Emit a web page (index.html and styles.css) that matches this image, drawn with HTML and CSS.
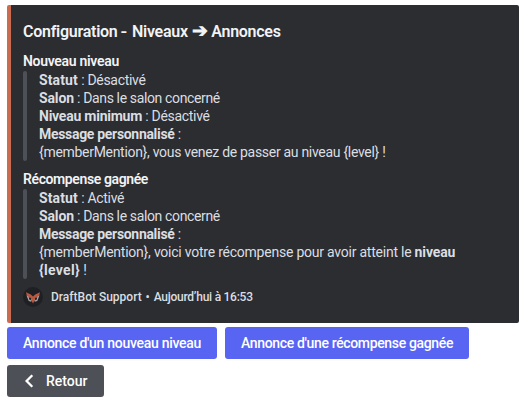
FILE: index.html
```
<!DOCTYPE html>
<html lang="fr">
<head>
<meta charset="utf-8">
<title>Configuration - Niveaux</title>
<link rel="stylesheet" href="styles.css">
</head>
<body>
<article class="embed">
  <h1 class="title">Configuration <span class="dash">-</span> Niveaux <span class="arrow">➔</span> Annonces</h1>
  <section class="field">
    <h2 class="name">Nouveau niveau</h2>
    <div class="quote">
      <p><b class="wide">Statut</b> : Désactivé</p>
      <p><b class="snug">Salon</b><span class="tight"> : Dans le salon concerné</span></p>
      <p><b>Niveau minimum</b> : Désactivé</p>
      <p><b class="message">Message personnalisé</b> :</p>
      <p>{memberMention}, vous venez de passer au niveau {level} !</p>
    </div>
  </section>
  <section class="field">
    <h2 class="name reward">Récompense gagnée</h2>
    <div class="quote">
      <p><b class="wide">Statut</b> : Activé</p>
      <p><b class="snug">Salon</b><span class="tight"> : Dans le salon concerné</span></p>
      <p><b class="message">Message personnalisé</b> :</p>
      <p class="long">{memberMention}, voici votre récompense pour avoir atteint le <b class="snug">niveau</b><br><b class="level">{level}</b> !</p>
    </div>
  </section>
  <footer class="footer">
    <svg class="avatar" viewBox="0 0 20 20" aria-hidden="true">
      <circle cx="10" cy="10" r="10" fill="#1f2024"/>
      <path fill="#a9a3a3" d="M3.500 8.500l3 1 2.500 3-.8 2.200-2.500-.6zM16.500 8.500l-3 1-2.500 3 .8 2.200 2.500-.6z"/>
      <path fill="#252327" d="M5.800 10l2.400 1.300-.5 2-1.500-.8zM14.200 10l-2.400 1.300.5 2 1.500-.8z"/>
      <path fill="#b9573f" d="M3 5.200l4.800 2.200L10 9.400l2.200-2L17 5.200l-.8 3.600-4 2L10.800 15 10 16.400 9.200 15l-1.400-4.200-4-2z"/>
    </svg>
    <span class="author">DraftBot Support</span><span class="dot">•</span><time class="date">Aujourd’hui à 16:53</time>
  </footer>
</article>
<div class="row first">
  <button class="button create">Annonce d'un nouveau niveau</button>
  <button class="button prize">Annonce d'une récompense gagnée</button>
</div>
<div class="row">
  <button class="button back">
    <svg class="chevron" viewBox="0 0 20 20" aria-hidden="true"><path d="M11.300 4.200L5.600 10l5.700 5.800"/></svg>
    Retour
  </button>
</div>
</body>
</html>
```
FILE: styles.css
```
* { box-sizing: border-box; }
body {
  margin: 0;
  padding: 5px 9px 0 7px;
  background: #fff;
  font: 14px/18px Roboto, "Noto Sans", sans-serif;
}
h1, h2, p { margin: 0; }
.embed {
  height: 318px;
  padding: 16px 16px 16px 12px;
  border-left: 4px solid #cb6b50;
  border-radius: 2px;
  background: #2b2d31;
  color: #dbdee1;
}
.title {
  height: 22px;
  color: #f2f3f5;
  font-size: 16px;
  font-weight: 600;
  line-height: 22px;
  letter-spacing: -.26px;
  white-space: nowrap;
}
.dash {
  display: inline-block;
  width: 7px;
  transform: scaleX(1.150);
}
.arrow {
  display: inline-block;
  width: 16px;
  font-size: 19px;
  line-height: 16px;
  letter-spacing: 0;
}
.field { margin-top: 9px; }
.name {
  margin-bottom: 1px;
  color: #f2f3f5;
  font-size: 14px;
  font-weight: 600;
  line-height: 18px;
  letter-spacing: -.3px;
}
.reward { letter-spacing: -.39px; }
.quote {
  position: relative;
  padding-left: 16px;
  letter-spacing: -.3px;
  white-space: nowrap;
}
.quote::before {
  content: "";
  position: absolute;
  inset: 0 auto 0 0;
  width: 4px;
  border-radius: 4px;
  background: #4e5058;
}
.quote b { font-weight: 700; letter-spacing: -.24px; }
.quote .wide { letter-spacing: .13px; }
.quote .snug { letter-spacing: -.13px; }
.quote .message { letter-spacing: -.31px; }
.quote .level { letter-spacing: .33px; }
.tight { letter-spacing: -.36px; }
.long { letter-spacing: -.23px; }
.footer {
  display: flex;
  align-items: center;
  height: 20px;
  margin-top: 8px;
  font-size: 12px;
  font-weight: 500;
  line-height: 16px;
}
.avatar { width: 20px; height: 20px; margin-right: 8px; }
.dot { width: 12px; text-align: center; }
.date { letter-spacing: -.26px; }
.row { display: flex; gap: 8px; margin-top: 6px; }
.row.first { margin-top: 4px; }
.button {
  display: flex;
  align-items: center;
  height: 32px;
  padding: 0 0 0 16px;
  border: 0;
  border-radius: 3px;
  background: #5865f2;
  color: #fff;
  font: 500 14px/16px Roboto, "Noto Sans", sans-serif;
  white-space: nowrap;
}
.create { width: 210px; letter-spacing: -.29px; }
.prize { width: 244px; letter-spacing: -.35px; }
.back { width: 97px; padding-left: 14px; background: #4e5058; }
.chevron {
  width: 20px;
  height: 20px;
  margin-right: 5px;
  fill: none;
  stroke: #fff;
  stroke-width: 2.3;
}
```
